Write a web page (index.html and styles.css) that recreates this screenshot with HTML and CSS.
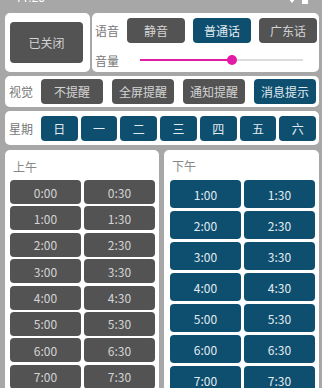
FILE: index.html
```html
<!DOCTYPE html>
<html lang="zh">
<head>
<meta charset="utf-8">
<link rel="stylesheet" href="styles.css">
</head>
<body>
<div class="status">
  <span class="clock">11:20</span>
  <span class="icons">
    <svg width="8" height="6" viewBox="0 0 8 6"><path d="M0 0 H8 L4 5 Z" fill="#fff"/></svg>
    <svg width="6" height="6" viewBox="0 0 6 6"><rect x="0" y="0" width="6" height="6" fill="#fff"/></svg>
  </span>
</div>

<div class="toprow">
  <div class="card power">
    <button class="btn gray big">已关闭</button>
  </div>
  <div class="card voice">
    <div class="line">
      <span class="lbl">语音</span>
      <div class="opts">
        <button class="btn gray">静音</button>
        <button class="btn blue">普通话</button>
        <button class="btn gray">广东话</button>
      </div>
    </div>
    <div class="line vol">
      <span class="lbl">音量</span>
      <div class="slider">
        <div class="fill"></div>
        <div class="thumb"></div>
      </div>
    </div>
  </div>
</div>

<div class="card row visual">
  <span class="lbl">视觉</span>
  <div class="opts">
    <button class="btn gray">不提醒</button>
    <button class="btn gray">全屏提醒</button>
    <button class="btn gray">通知提醒</button>
    <button class="btn blue">消息提示</button>
  </div>
</div>

<div class="card row week">
  <span class="lbl">星期</span>
  <div class="days">
    <button class="btn blue">日</button>
    <button class="btn blue">一</button>
    <button class="btn blue">二</button>
    <button class="btn blue">三</button>
    <button class="btn blue">四</button>
    <button class="btn blue">五</button>
    <button class="btn blue">六</button>
  </div>
</div>

<div class="bottom">
  <div class="card half am">
    <div class="title">上午</div>
    <div class="grid">
      <button class="btn gray">0:00</button><button class="btn gray">0:30</button>
      <button class="btn gray">1:00</button><button class="btn gray">1:30</button>
      <button class="btn gray">2:00</button><button class="btn gray">2:30</button>
      <button class="btn gray">3:00</button><button class="btn gray">3:30</button>
      <button class="btn gray">4:00</button><button class="btn gray">4:30</button>
      <button class="btn gray">5:00</button><button class="btn gray">5:30</button>
      <button class="btn gray">6:00</button><button class="btn gray">6:30</button>
      <button class="btn gray">7:00</button><button class="btn gray">7:30</button>
    </div>
  </div>
  <div class="card half pm">
    <div class="title">下午</div>
    <div class="grid">
      <button class="btn blue">1:00</button><button class="btn blue">1:30</button>
      <button class="btn blue">2:00</button><button class="btn blue">2:30</button>
      <button class="btn blue">3:00</button><button class="btn blue">3:30</button>
      <button class="btn blue">4:00</button><button class="btn blue">4:30</button>
      <button class="btn blue">5:00</button><button class="btn blue">5:30</button>
      <button class="btn blue">6:00</button><button class="btn blue">6:30</button>
      <button class="btn blue">7:00</button><button class="btn blue">7:30</button>
    </div>
  </div>
</div>
</body>
</html>
```

FILE: styles.css
```css
* { box-sizing: border-box; }
html, body { margin: 0; padding: 0; }
body {
  width: 322px;
  height: 388px;
  overflow: hidden;
  background: #a7a7a7;
  font-family: "Noto Sans CJK SC", "Noto Sans", sans-serif;
  font-size: 12px;
  color: #777;
}
.status {
  height: 13px;
  display: flex;
  justify-content: space-between;
  overflow: hidden;
  padding: 0 14px 0 15px;
}
.clock {
  color: #fff;
  font-family: Roboto, sans-serif;
  font-size: 12px;
  line-height: 12px;
  margin-top: -8px;
}
.icons { display: flex; gap: 6px; align-items: flex-start; margin-top: -2px; }
.card {
  background: #fff;
  border-radius: 5px;
}
.btn {
  border: 0;
  margin: 0;
  padding: 0;
  border-radius: 4px;
  font-family: "Noto Sans CJK SC", sans-serif;
  font-size: 12px;
  display: flex;
  align-items: center;
  justify-content: center;
}
.btn.gray { background: #535353; color: #d4d4d4; }
.btn.blue { background: #0e4e6e; color: #e2ecf2; }

.toprow {
  display: flex;
  gap: 2px;
  padding: 0 3px 0 5px;
  height: 59px;
}
.power {
  width: 85px;
  display: flex;
  align-items: center;
  padding: 0 7px 0 5px;
}
.big { width: 73px; height: 41px; font-size: 12px; }
.voice {
  flex: 1;
  padding: 5px 0 0 3px;
}
.line { display: flex; align-items: center; }
.lbl { width: 32px; flex: none; font-size: 12px; color: #777; }
.opts { display: flex; gap: 8px; }
.voice .opts .btn { width: 58px; height: 25px; }
.vol { margin-top: 5px; height: 24px; }
.slider {
  position: relative;
  margin-left: 13px;
  width: 163px;
  height: 2px;
  background: #dcdcdc;
}
.fill {
  width: 92px;
  height: 2px;
  background: #e21aa6;
}
.thumb {
  position: absolute;
  left: 87px;
  top: -4px;
  width: 10px;
  height: 10px;
  border-radius: 50%;
  background: #e21aa6;
}

.row {
  margin: 4px 3px 0 5px;
  display: flex;
  align-items: center;
  padding-left: 4px;
}
.row .lbl { width: 32px; }
.visual { height: 31px; }
.visual .opts { gap: 9px; }
.visual .opts .btn { width: 62px; height: 25px; }
.week { height: 34px; margin-top: 4px; }
.days { display: flex; gap: 3px; flex: 1; padding-right: 3px; }
.days .btn { flex: 1; height: 25px; }

.bottom {
  display: flex;
  gap: 5px;
  padding: 5px 3px 0 5px;
}
.half {
  flex: 1;
  height: 238px;
  overflow: hidden;
  border-radius: 5px 5px 0 0;
}
.title {
  font-size: 12px;
  color: #888;
  line-height: 16px;
}
.am { padding: 9px 4px 0 5px; }
.am .title { padding-left: 3px; margin-bottom: 5px; }
.grid {
  display: grid;
  grid-template-columns: 1fr 1fr;
  column-gap: 3px;
}
.am .grid { row-gap: 2.4px; }
.am .grid .btn { height: 24px; }
.pm { padding: 8px 4px 0 6px; }
.pm .title { padding-left: 2px; margin-bottom: 6px; }
.pm .grid { row-gap: 3px; }
.pm .grid .btn { height: 28px; }
```
